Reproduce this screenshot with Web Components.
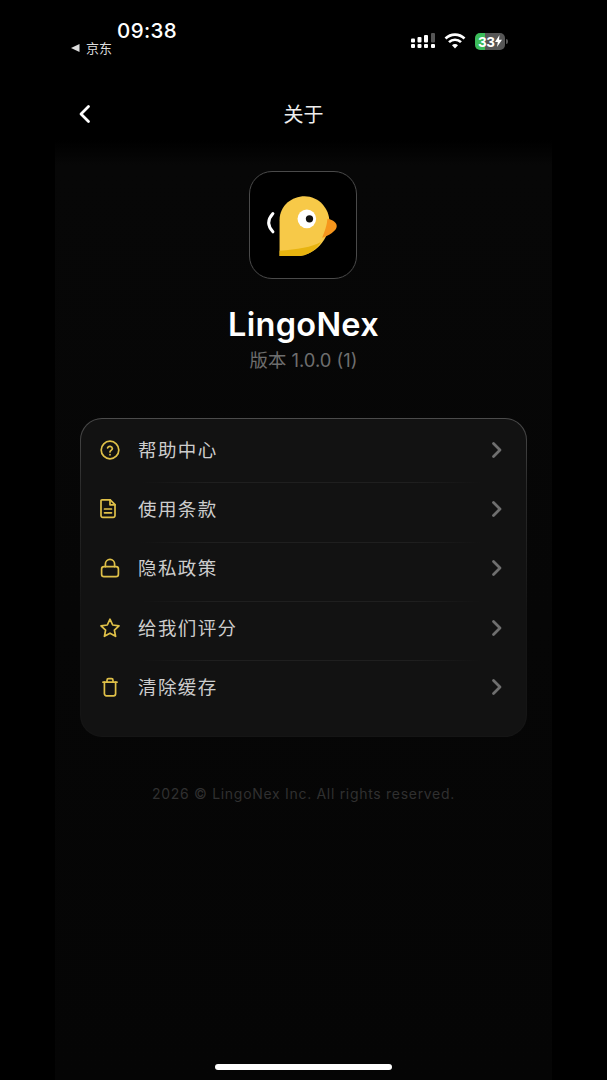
<!DOCTYPE html>
<html lang="zh">
<head>
<meta charset="utf-8">
<title>关于</title>
<style>
html,body{margin:0;height:1080px;background:#000;overflow:hidden}
body{font-family:Inter,"Noto Sans CJK SC",sans-serif}
</style>
</head>
<body>
<about-screen>
  <status-bar slot="status"></status-bar>
  <nav-bar slot="nav" title="关于"></nav-bar>
  <app-info slot="info" name="LingoNex" version="版本 1.0.0 (1)"></app-info>
  <menu-card slot="menu">
    <menu-row icon="help">帮助中心</menu-row>
    <menu-row icon="doc">使用条款</menu-row>
    <menu-row icon="lock">隐私政策</menu-row>
    <menu-row icon="star">给我们评分</menu-row>
    <menu-row icon="trash" last>清除缓存</menu-row>
  </menu-card>
  <span slot="copy">2026 © LingoNex Inc. All rights reserved.</span>
</about-screen>
<script>
const icons={
  help:'<circle cx="12" cy="12" r="8.8"/><path d="M9.6 9.9a2.5 2.5 0 0 1 4.8.7c0 1.6-2.4 1.9-2.4 3.3"/><path d="M12 16.6v.2"/>',
  doc:'<path d="M4 2.8h8.2L17 7.6V18.6a1.8 1.8 0 0 1-1.8 1.8H4.8A1.8 1.8 0 0 1 3 18.6V3.8a1 1 0 0 1 1-1z"/><path d="M12 2.8v5h5"/><path d="M6.5 12h7M6.5 15.8h7"/>',
  lock:'<rect x="3.6" y="10.6" width="16.8" height="10" rx="2.4"/><path d="M7.4 10.6V8a4.6 4.6 0 0 1 9.2 0v2.6"/>',
  star:'<path d="M12 3.2l2.7 5.8 6.3.8-4.6 4.3 1.2 6.2L12 17.2l-5.6 3.1 1.2-6.2L3 9.8l6.3-.8z"/>',
  trash:'<path d="M5 7.2h14"/><path d="M6.4 7.2v11.6a2 2 0 0 0 2 2h7.2a2 2 0 0 0 2-2V7.2"/><path d="M9 7V5.2a1.5 1.5 0 0 1 1.5-1.5h3a1.5 1.5 0 0 1 1.5 1.5V7"/>'
}

class AboutScreen extends HTMLElement{
  constructor(){
    super()
    this.attachShadow({mode:'open'}).innerHTML=`
    <style>
      :host{display:flex;justify-content:center;height:1080px;background:#000}
      .phone{width:497px;height:1080px;display:flex;flex-direction:column;position:relative;
        background:linear-gradient(#000 0,#000 140px,#070707 165px,#050505 100%)}
      ::slotted([slot=copy]){display:block;text-align:center;margin-top:47px;font-size:14px;line-height:20px;letter-spacing:.7px;color:#303030}
      .home{position:absolute;left:160px;bottom:10px;width:177px;height:6px;border-radius:3px;background:#fff}
    </style>
    <div class="phone">
      <slot name="status"></slot>
      <slot name="nav"></slot>
      <slot name="info"></slot>
      <slot name="menu"></slot>
      <slot name="copy"></slot>
      <div class="home"></div>
    </div>`
  }
}

class StatusBar extends HTMLElement{
  constructor(){
    super()
    this.attachShadow({mode:'open'}).innerHTML=`
    <style>
      :host{display:flex;justify-content:space-between;height:84px;box-sizing:border-box;padding:19px 44px 0 16px;color:#fff}
      .left{display:flex;flex-direction:column;width:110px}
      .time{font:500 20.5px/24px Inter,sans-serif;letter-spacing:.4px;margin-left:46px}
      .back{display:flex;align-items:center;gap:6px;font:13px/14px "Noto Sans CJK SC",sans-serif;color:#ddd;margin-top:-2px}
      .right{display:flex;align-items:center;gap:8px;height:44px}
      .batt{display:flex;align-items:center;margin-left:1px}
      .cell{width:30px;height:17px;border-radius:5px;background:linear-gradient(90deg,#3cbc5a 0,#3cbc5a 33%,#565656 33%);
        font:700 15px/17px "Liberation Sans",sans-serif;color:#fff;display:flex;justify-content:center;align-items:center}
      .nub{width:2px;height:5px;background:#565656;margin-left:1px;border-radius:0 2px 2px 0}
    </style>
    <div class="left">
      <div class="time">09:38</div>
      <div class="back"><svg width="9" height="8" viewBox="0 0 9 8"><path d="M0 4l8.5-4v8z" fill="#ddd"/></svg>京东</div>
    </div>
    <div class="right">
      <svg width="25" height="16" viewBox="0 0 25 16" fill="#fff">
        <rect x="0" y="5.5" width="4" height="4" rx="1"/><rect x="0" y="11" width="4" height="4" rx="1"/>
        <rect x="6.5" y="4" width="4" height="5.5" rx="1"/><rect x="6.5" y="11" width="4" height="4" rx="1"/>
        <rect x="13" y="2" width="4" height="7.5" rx="1"/><rect x="13" y="11" width="4" height="4" rx="1"/>
        <rect x="20" y="0" width="4" height="9.5" rx="1" fill="#555"/><rect x="20" y="11" width="4" height="4" rx="1"/>
      </svg>
      <svg width="22" height="16" viewBox="0 0 22 16" fill="none" stroke="#fff" stroke-width="2.6">
        <path d="M1.5 5.5a13.5 13.5 0 0 1 19 0"/><path d="M5 9.2a8.5 8.5 0 0 1 12 0"/>
        <path d="M11 15.5l-3-3.3a4.2 4.2 0 0 1 6 0z" fill="#fff" stroke="none"/>
      </svg>
      <div class="batt"><div class="cell"><span>33</span><svg width="7" height="12" viewBox="0 0 7 12"><path d="M4.5 0L0 7h2.8L2 12l5-7.2H4z" fill="#fff"/></svg></div><div class="nub"></div></div>
    </div>`
  }
}

class NavBar extends HTMLElement{
  connectedCallback(){
    if(this.shadowRoot)return
    this.attachShadow({mode:'open'}).innerHTML=`
    <style>
      :host{display:flex;align-items:center;justify-content:center;position:relative;height:60px;
        font:400 20px/58px "Noto Sans CJK SC",sans-serif;color:#eee}
      svg{position:absolute;left:20px;top:20px}
    </style>
    <svg width="20" height="20" viewBox="0 0 20 20" fill="none" stroke="#fff" stroke-width="2.8" stroke-linecap="round" stroke-linejoin="round"><path d="M13.5 2.5L6 10l7.5 7.5"/></svg>
    <span>${this.getAttribute('title')}</span>`
  }
}

class AppInfo extends HTMLElement{
  connectedCallback(){
    if(this.shadowRoot)return
    this.attachShadow({mode:'open'}).innerHTML=`
    <style>
      :host{display:flex;flex-direction:column;align-items:center;padding-top:27px}
      .logo{width:108px;height:108px;box-sizing:border-box;border:1px solid #4a4a4a;border-radius:23px;background:#000;margin-right:1px}
      .logo svg{display:block;width:106px;height:106px}
      h1{margin:26px 0 0;font:600 32.5px/40px Inter,sans-serif;color:#fff;letter-spacing:.3px}
      p{margin:3px 0 0;font:400 18.4px/24px Inter,"Noto Sans CJK SC",sans-serif;color:#6e6e6e}
    </style>
    <div class="logo">
      <svg viewBox="58 35 319 319">
        <path d="M147 288V180C147 135 185 108 222 108C265 108 297 145 297 185C297 240 250 288 200 288Z" fill="#f7c948"/>
        <path d="M147 288V272C200 268 245 262 272 245C255 272 230 288 200 288Z" fill="#e8b40f"/>
        <path d="M291 176C310 180 319 188 319 198C319 212 295 226 275 233C283 215 290 195 291 176Z" fill="#f6961d"/>
        <circle cx="229" cy="176" r="28" fill="#fff"/>
        <circle cx="237" cy="176" r="11" fill="#111"/>
        <path d="M127 160C109 180 111 198 127 215" fill="none" stroke="#fff" stroke-width="9" stroke-linecap="round"/>
      </svg>
    </div>
    <h1>${this.getAttribute('name')}</h1>
    <p>${this.getAttribute('version')}</p>`
  }
}

class MenuCard extends HTMLElement{
  constructor(){
    super()
    this.attachShadow({mode:'open'}).innerHTML=`
    <style>
      :host{display:block;margin:46px 25px 0;box-sizing:border-box;height:319px;
        border-radius:22px;border:1px solid transparent;
        background:linear-gradient(#121212,#121212) padding-box,linear-gradient(#4c4c4c,#2a2a2a 22%,#151515 60%,#151515) border-box}
    </style>
    <slot></slot>`
  }
}

class MenuRow extends HTMLElement{
  connectedCallback(){
    if(this.shadowRoot)return
    const last=this.hasAttribute('last')
    this.attachShadow({mode:'open'}).innerHTML=`
    <style>
      :host{display:flex;align-items:center;height:59.3px;position:relative;padding:0 23px 0 17px;
        font:400 18.5px/24px "Noto Sans CJK SC",sans-serif;color:#cdcdcd;letter-spacing:1.4px}
      .ic{width:24px;height:24px;margin:2px 16px 0 0;flex:none}
      .chev{margin-top:2px;flex:none}
      .txt{flex:1}
      .line{position:absolute;left:60px;right:45px;bottom:-5px;height:1px;z-index:1;
        background:linear-gradient(90deg,#121212,#1f1f1f 20%,#1f1f1f 80%,#121212);display:${last?'none':'block'}}
    </style>
    <svg class="ic" viewBox="0 0 24 24" fill="none" stroke="#dfc048" stroke-width="1.7" stroke-linecap="round" stroke-linejoin="round">${icons[this.getAttribute('icon')]}</svg>
    <span class="txt"><slot></slot></span>
    <svg class="chev" width="12" height="18" viewBox="0 0 12 18" fill="none" stroke="#6f6f6f" stroke-width="2.8" stroke-linecap="round" stroke-linejoin="round"><path d="M2.5 2.5L9 9l-6.5 6.5"/></svg>
    <div class="line"></div>`
  }
}

customElements.define('about-screen',AboutScreen)
customElements.define('status-bar',StatusBar)
customElements.define('nav-bar',NavBar)
customElements.define('app-info',AppInfo)
customElements.define('menu-card',MenuCard)
customElements.define('menu-row',MenuRow)
</script>
</body>
</html>
